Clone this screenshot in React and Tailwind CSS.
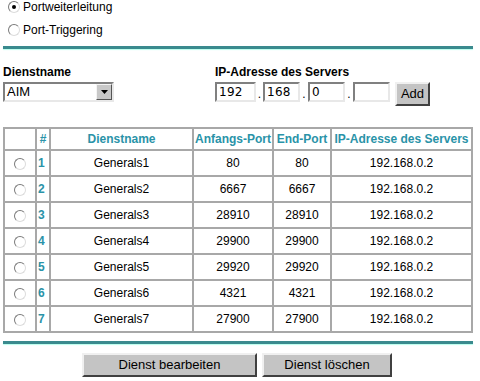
import React, { useState } from "react";

const rows = [
  { id: 1, name: "Generals1", start: "80", end: "80", ip: "192.168.0.2" },
  { id: 2, name: "Generals2", start: "6667", end: "6667", ip: "192.168.0.2" },
  { id: 3, name: "Generals3", start: "28910", end: "28910", ip: "192.168.0.2" },
  { id: 4, name: "Generals4", start: "29900", end: "29900", ip: "192.168.0.2" },
  { id: 5, name: "Generals5", start: "29920", end: "29920", ip: "192.168.0.2" },
  { id: 6, name: "Generals6", start: "4321", end: "4321", ip: "192.168.0.2" },
  { id: 7, name: "Generals7", start: "27900", end: "27900", ip: "192.168.0.2" },
];

// old-style windows radio
const Radio = ({ checked }) => (
  <span className="relative inline-block w-[12px] h-[12px] rounded-full bg-white border border-[#7a7a7a] border-r-[#dcdcdc] border-b-[#dcdcdc] shrink-0">
    {checked && (
      <span className="absolute left-[3px] top-[3px] w-[4px] h-[4px] rounded-full bg-black" />
    )}
  </span>
);

const Field = ({ value, w }) => (
  <div
    className={`${w} h-[20px] bg-white border-2 border-[#808080] border-r-[#e8e8e8] border-b-[#e8e8e8] px-[2px] text-[12px] leading-[16px] font-['DejaVu_Sans',sans-serif] tracking-[0.3px]`}
  >
    {value}
  </div>
);

const Button = ({ children, className }) => (
  <button
    className={`h-[24px] bg-[#c4c4c4] border-2 border-[#f0f0f0] border-r-[#404040] border-b-[#404040] text-[13px] text-black ${className}`}
  >
    {children}
  </button>
);

export default function App() {
  const [mode] = useState("forward");

  return (
    <div className="w-[480px] h-[381px] bg-white font-['Liberation_Sans',Arial,sans-serif] text-[12px] text-black overflow-hidden">
      {/* mode radios */}
      <div className="pl-[8px] pt-[1px] flex flex-col gap-[11px]">
        <label className="flex items-center gap-[3px] h-[12px]">
          <Radio checked={mode === "forward"} />
          <span>Portweiterleitung</span>
        </label>
        <label className="flex items-center gap-[3px] h-[12px]">
          <Radio checked={mode === "trigger"} />
          <span>Port-Triggering</span>
        </label>
      </div>

      <div className="mx-[3px] mt-[10px] w-[470px] h-[3px] bg-[#3a8a8e] shadow-[0_1px_1px_#bfe]" />

      {/* service / server */}
      <div className="flex pl-[3px] mt-[16px]">
        <div className="w-[212px]">
          <div className="font-bold h-[14px] leading-[14px]">Dienstname</div>
          <div className="mt-[3px] w-[111px] h-[20px] flex border-2 border-[#808080] border-r-[#e8e8e8] border-b-[#e8e8e8] bg-white">
            <span className="flex-1 pl-[2px] text-[13px] leading-[16px]">AIM</span>
            <span className="w-[16px] h-[16px] bg-[#c8c8c8] border border-[#f4f4f4] border-r-[#555] border-b-[#555] flex items-center justify-center">
              <svg width="7" height="4" viewBox="0 0 7 4">
                <path d="M0 0h7L3.5 4z" fill="#000" />
              </svg>
            </span>
          </div>
        </div>
        <div>
          <div className="font-bold h-[14px] leading-[14px]">IP-Adresse des Servers</div>
          <div className="mt-[3px] flex items-start">
            <Field value="192" w="w-[41px]" />
            <span className="w-[7px] text-center leading-[24px]">.</span>
            <Field value="168" w="w-[37px]" />
            <span className="w-[8px] text-center leading-[24px]">.</span>
            <Field value="0" w="w-[37px]" />
            <span className="w-[8px] text-center leading-[24px]">.</span>
            <Field value="" w="w-[37px]" />
            <Button className="ml-[5px] w-[35px] h-[22px] text-[13px] leading-[16px]">Add</Button>
          </div>
        </div>
      </div>

      {/* table */}
      <table className="mt-[21px] ml-[3px] w-[470px] border-separate border-spacing-0 border border-[#a8a8a8] text-center">
        <thead>
          <tr className="h-[22px] font-bold text-[#2a93a8]">
            <th className="w-[32px] border border-[#a8a8a8]"></th>
            <th className="w-[14px] border border-[#a8a8a8]">#</th>
            <th className="w-[143px] border border-[#a8a8a8]">Dienstname</th>
            <th className="w-[80px] border border-[#a8a8a8]">Anfangs-Port</th>
            <th className="w-[58px] border border-[#a8a8a8]">End-Port</th>
            <th className="border border-[#a8a8a8]">IP-Adresse des Servers</th>
          </tr>
        </thead>
        <tbody>
          {rows.map((r) => (
            <tr key={r.id} className="h-[26px]">
              <td className="border border-[#a8a8a8]">
                <div className="flex justify-center pt-[1px]">
                  <Radio />
                </div>
              </td>
              <td className="border border-[#a8a8a8] font-bold text-[#2a93a8] text-left pl-[1px]">{r.id}</td>
              <td className="border border-[#a8a8a8]">{r.name}</td>
              <td className="border border-[#a8a8a8]">{r.start}</td>
              <td className="border border-[#a8a8a8]">{r.end}</td>
              <td className="border border-[#a8a8a8]">{r.ip}</td>
            </tr>
          ))}
        </tbody>
      </table>

      <div className="mx-[3px] mt-[8px] w-[470px] h-[3px] bg-[#3a8a8e] shadow-[0_1px_1px_#bfe]" />

      {/* actions */}
      <div className="flex justify-center gap-[5px] mt-[9px] pr-[6px]">
        <Button className="w-[175px]">Dienst bearbeiten</Button>
        <Button className="w-[130px]">Dienst löschen</Button>
      </div>
    </div>
  );
}
